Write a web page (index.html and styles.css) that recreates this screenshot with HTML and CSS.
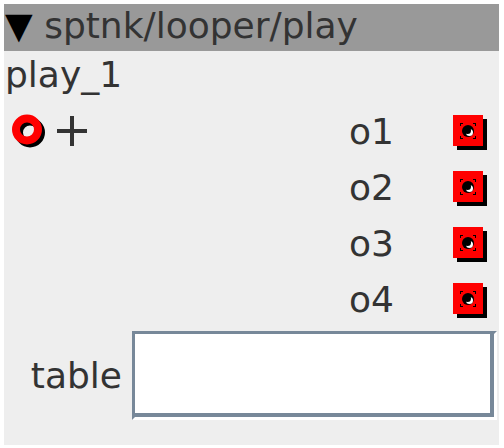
FILE: index.html
```html
<!DOCTYPE html>
<html>
<head>
    <title>sptnk/looper/play</title>
    <link rel="stylesheet" href="styles.css">
</head>
<body>
    <div class="node">
        <div class="node-title"><span class="caret">▼</span> sptnk/looper/play</div>
        <div class="node-body">
            <div class="node-name">play_1</div>

            <!-- ports -->
            <div class="port-row">
                <div class="inlets">
                    <svg class="inlet" width="36" height="37" viewBox="0 0 36 37">
                        <circle cx="18" cy="18.5" r="11" fill="none" stroke="#000" stroke-width="8"/>
                        <circle cx="15" cy="15.5" r="11" fill="none" stroke="#f00" stroke-width="8"/>
                    </svg>
                    <svg class="add" width="32" height="32" viewBox="0 0 32 32">
                        <rect x="1" y="14" width="30" height="4" fill="#333"/>
                        <rect x="14" y="1" width="4" height="30" fill="#333"/>
                    </svg>
                </div>
                <span class="outlet-name">o1</span>
                <svg class="outlet" width="34" height="35" viewBox="0 0 34 35">
                    <rect x="4" y="4" width="30" height="31" fill="#000"/>
                    <rect x="0" y="0" width="30" height="31" fill="#f00"/>
                    <path d="M7 8h3v1H8v2H7zM23 8h-3v1h2v2h1zM7 24h3v-1H8v-2H7zM23 24h-3v-1h2v-2h1z" fill="#000"/>
                    <circle cx="15" cy="16" r="6" fill="#000"/>
                    <circle cx="16.5" cy="17.5" r="3.5" fill="#fff"/>
                    <circle cx="14.5" cy="15.5" r="3.5" fill="#000"/>
                </svg>
            </div>
            <div class="port-row">
                <div class="inlets"></div>
                <span class="outlet-name">o2</span>
                <svg class="outlet" width="34" height="35" viewBox="0 0 34 35">
                    <rect x="4" y="4" width="30" height="31" fill="#000"/>
                    <rect x="0" y="0" width="30" height="31" fill="#f00"/>
                    <path d="M7 8h3v1H8v2H7zM23 8h-3v1h2v2h1zM7 24h3v-1H8v-2H7zM23 24h-3v-1h2v-2h1z" fill="#000"/>
                    <circle cx="15" cy="16" r="6" fill="#000"/>
                    <circle cx="16.5" cy="17.5" r="3.5" fill="#fff"/>
                    <circle cx="14.5" cy="15.5" r="3.5" fill="#000"/>
                </svg>
            </div>
            <div class="port-row">
                <div class="inlets"></div>
                <span class="outlet-name">o3</span>
                <svg class="outlet" width="34" height="35" viewBox="0 0 34 35">
                    <rect x="4" y="4" width="30" height="31" fill="#000"/>
                    <rect x="0" y="0" width="30" height="31" fill="#f00"/>
                    <path d="M7 8h3v1H8v2H7zM23 8h-3v1h2v2h1zM7 24h3v-1H8v-2H7zM23 24h-3v-1h2v-2h1z" fill="#000"/>
                    <circle cx="15" cy="16" r="6" fill="#000"/>
                    <circle cx="16.5" cy="17.5" r="3.5" fill="#fff"/>
                    <circle cx="14.5" cy="15.5" r="3.5" fill="#000"/>
                </svg>
            </div>
            <div class="port-row">
                <div class="inlets"></div>
                <span class="outlet-name">o4</span>
                <svg class="outlet" width="34" height="35" viewBox="0 0 34 35">
                    <rect x="4" y="4" width="30" height="31" fill="#000"/>
                    <rect x="0" y="0" width="30" height="31" fill="#f00"/>
                    <path d="M7 8h3v1H8v2H7zM23 8h-3v1h2v2h1zM7 24h3v-1H8v-2H7zM23 24h-3v-1h2v-2h1z" fill="#000"/>
                    <circle cx="15" cy="16" r="6" fill="#000"/>
                    <circle cx="16.5" cy="17.5" r="3.5" fill="#fff"/>
                    <circle cx="14.5" cy="15.5" r="3.5" fill="#000"/>
                </svg>
            </div>

            <!-- parameter -->
            <div class="param">
                <label class="param-label">table</label>
                <div class="entry"><div class="entry-inner"></div></div>
            </div>
        </div>
    </div>
</body>
</html>
```

FILE: styles.css
```css
:root {
    --text: #333;
    --title-bg: #999;
    --body-bg: #eee;
    --port: #f00;
    --entry-border: #778899;
}
body {
    margin: 0;
    background: white;
    font-family: 'DejaVu Sans', sans-serif;
    font-size: 36px;
    color: var(--text);
}
.node {
    margin: 4px 5px 4px 4px;
    background: var(--body-bg);
}
.node-title {
    background: var(--title-bg);
    height: 47px;
    line-height: 42px;
    padding: 1px 0 0 1px;
    box-sizing: border-box;
    white-space: nowrap;
}
.caret {
    color: #000;
}
.node-body {
    padding-bottom: 25px;
}
.node-name {
    line-height: 42px;
    padding: 3px 0 0 1px;
    height: 53px;
    box-sizing: border-box;
}
.port-row {
    display: grid;
    grid-template-columns: 1fr 104px 34px;
    align-items: center;
    height: 56px;
    padding: 0 12px 0 8px;
}
.inlets {
    display: flex;
    align-items: center;
}
.inlet {
    display: block;
}
.add {
    display: block;
    margin-left: 8px;
    margin-top: -2px;
}
.outlet-name {
    line-height: 42px;
}
.outlet {
    display: block;
}
.param {
    display: flex;
    align-items: center;
    margin-top: 3px;
    padding-right: 2px;
}
.param-label {
    width: 128px;
    text-align: right;
    padding-right: 10px;
    box-sizing: border-box;
}
.entry {
    flex: 1;
    height: 89px;
    box-sizing: border-box;
    border: 3px solid;
    border-color: var(--entry-border) white white var(--entry-border);
}
.entry-inner {
    height: 100%;
    box-sizing: border-box;
    background: white;
    border-right: 4px solid var(--entry-border);
    border-bottom: 4px solid var(--entry-border);
}
```
